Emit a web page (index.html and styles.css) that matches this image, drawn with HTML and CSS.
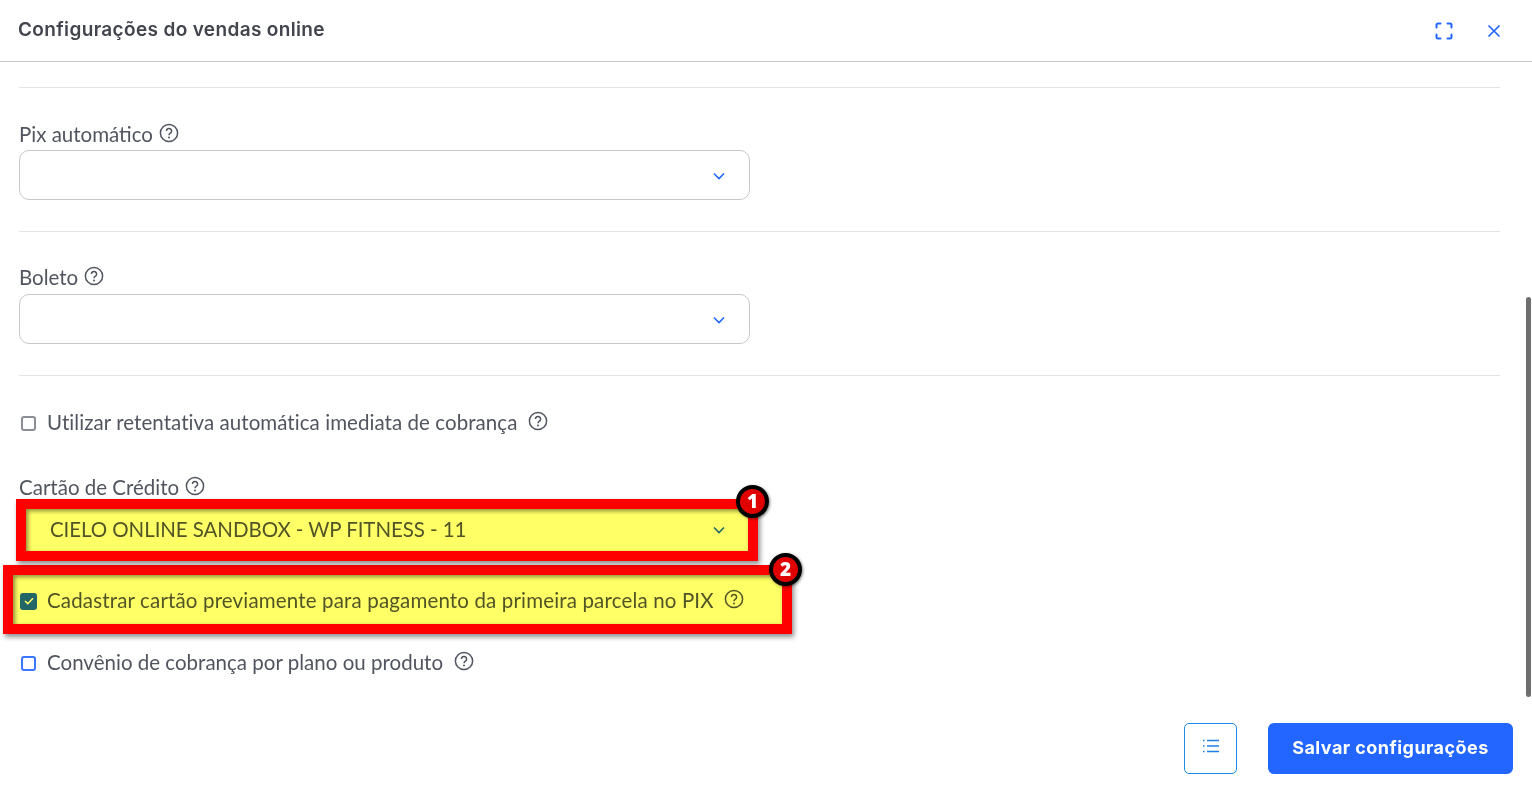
FILE: index.html
```html
<!DOCTYPE html>
<html lang="pt-BR">
<head>
<meta charset="utf-8">
<title>Configurações do vendas online</title>
<link rel="stylesheet" href="styles.css">
</head>
<body>
<div class="modal">
  <header class="modal-head">
    <h1 class="modal-title">Configurações do vendas online</h1>
    <div class="head-actions">
      <svg class="icon-expand" width="18" height="18" viewBox="0 0 18 18" fill="none" stroke="#2266ff" stroke-width="2" stroke-linecap="round"><path d="M1.5 5.5V3a1.5 1.5 0 0 1 1.5-1.5h2.5M12.5 1.5H15A1.5 1.5 0 0 1 16.500 3v2.500M16.500 12.500V15a1.500 1.500 0 0 1-1.500 1.500h-2.500M5.500 16.500H3A1.500 1.500 0 0 1 1.500 15v-2.500"/></svg>
      <svg width="14" height="14" viewBox="0 0 14 14" fill="none" stroke="#2266ff" stroke-width="1.700"><path d="M1.500 1.500l11 11M12.500 1.500l-11 11"/></svg>
    </div>
  </header>

  <main class="modal-body">
    <hr class="rule rule-first">
    <section class="field field-pix">
      <label class="field-label">Pix automático <svg class="help"><use href="#help"/></svg></label>
      <div class="select"><svg class="chev"><use href="#chev"/></svg></div>
    </section>
    <hr class="rule">
    <section class="field field-boleto">
      <label class="field-label">Boleto <svg class="help"><use href="#help"/></svg></label>
      <div class="select"><svg class="chev"><use href="#chev"/></svg></div>
    </section>
    <hr class="rule">
    <div class="check-row check-retry">
      <span class="box"></span>
      <span>Utilizar retentativa automática imediata de cobrança</span>
      <svg class="help"><use href="#help"/></svg>
    </div>
    <section class="field field-card">
      <label class="field-label">Cartão de Crédito <svg class="help"><use href="#help"/></svg></label>
      <div class="select select-filled"><span>CIELO ONLINE SANDBOX - WP FITNESS - 11</span><svg class="chev"><use href="#chev"/></svg></div>
    </section>
    <div class="check-row check-pix">
      <span class="box box-on"><svg width="10" height="8" viewBox="0 0 10 8" fill="none" stroke="#fff" stroke-width="1.600"><path d="M1 4l2.800 2.700L9 1.200"/></svg></span>
      <span>Cadastrar cartão previamente para pagamento da primeira parcela no PIX</span>
      <svg class="help"><use href="#help"/></svg>
    </div>
    <div class="check-row check-conv">
      <span class="box box-blue"></span>
      <span>Convênio de cobrança por plano ou produto</span>
      <svg class="help"><use href="#help"/></svg>
    </div>
  </main>

  <footer class="modal-foot">
    <button class="btn-list" type="button" aria-label="Lista">
      <svg width="18" height="14" viewBox="0 0 18 14" fill="none" stroke="#1f7fe0" stroke-width="1.400"><path d="M5 1.500h12M5 7h12M5 12.500h12"/><path d="M1 1.500h1.500M1 7h1.500M1 12.500h1.500"/></svg>
    </button>
    <button class="btn-save" type="button">Salvar configurações</button>
  </footer>
</div>

<div class="scrollbar"></div>

<div class="mark mark-one"></div>
<div class="mark mark-two"></div>
<span class="badge badge-one">1</span>
<span class="badge badge-two">2</span>

<svg class="defs" width="0" height="0">
  <symbol id="help" viewBox="0 0 20 20">
    <circle cx="10" cy="10" r="8.600" fill="none" stroke="currentColor" stroke-width="1.500"/>
    <path d="M7.400 8a2.600 2.600 0 1 1 4 2.200c-.9.6-1.400 1-1.400 2" fill="none" stroke="currentColor" stroke-width="1.500"/>
    <circle cx="10" cy="14.500" r="1" fill="currentColor"/>
  </symbol>
  <symbol id="chev" viewBox="0 0 12 8">
    <path d="M1 1.500l5 5 5-5" fill="none" stroke="#2266ff" stroke-width="1.600"/>
  </symbol>
</svg>
</body>
</html>
```
FILE: styles.css
```css
* { box-sizing: border-box; }
html, body { margin: 0; height: 100%; }
body {
  width: 1532px;
  height: 792px;
  overflow: hidden;
  position: relative;
  background: #fff;
  color: #51555f;
  font-family: "Lato", "Noto Sans", sans-serif;
  font-size: 20.5px;
}
.modal { display: flex; flex-direction: column; height: 792px; }
.modal-head {
  height: 62px;
  flex: none;
  display: flex;
  align-items: center;
  justify-content: space-between;
  padding: 0 31px 4px 18px;
  border-bottom: 1px solid #c9c9c9;
}
.modal-title {
  margin: 0;
  font-family: "Inter", "Open Sans", sans-serif;
  font-size: 19px;
  font-weight: 600;
  letter-spacing: .35px;
  color: #42454e;
  position: relative;
  top: 1px;
}
.head-actions { display: flex; align-items: center; gap: 34px; padding-top: 4px; }
.modal-body { flex: 1; padding: 25px 32px 0 19px; }
.rule { height: 1px; margin: 0; border: 0; background: #e4e4e4; }
.field { width: 731px; }
.field-label { display: flex; align-items: center; gap: 6px; height: 28px; line-height: 28px; padding-top: 2px; }
.field-label .help { margin-top: -2px; }
.field-pix { padding-top: 31px; padding-bottom: 31px; }
.field-pix .select { margin-top: 3px; }
.field-boleto { padding-top: 29px; padding-bottom: 31px; }
.field-boleto .field-label { height: 30px; }
.field-boleto .select { margin-top: 3px; }
.select {
  height: 50px;
  border: 1px solid #c8c8c8;
  border-radius: 10px;
  display: flex;
  align-items: center;
  justify-content: space-between;
  padding: 0 24px 0 30px;
}
.select-filled { margin-top: 3px; border-color: transparent; letter-spacing: -.08px; padding-top: 2px; }
.chev { width: 12px; height: 8px; margin-left: auto; position: relative; top: 1px; }
.help { width: 20px; height: 20px; flex: none; color: #51555f; }
.check-row { display: flex; align-items: center; height: 28px; padding-top: 2px; white-space: nowrap; letter-spacing: .06px; }
.check-row .help { margin-left: 11px; margin-top: -3px; }
.box {
  width: 15px;
  height: 15px;
  margin: 2px 11px 0 2px;
  flex: none;
  border: 2px solid #8b8e95;
  border-radius: 3px;
  display: flex;
  align-items: center;
  justify-content: center;
}
.box-on { width: 17px; height: 17px; margin: 2px 10px 0 1px; background: #2266ff; border-color: #2266ff; }
.box-blue { border-color: #3a76ff; }
.check-retry { margin-top: 31px; }
.field-card { padding-top: 37px; }
.check-pix { margin-top: 32px; letter-spacing: .155px; }
.check-pix .help { margin-left: 10px; }
.check-conv { margin-top: 34px; letter-spacing: .01px; }
.modal-foot {
  flex: none;
  height: 69px;
  display: flex;
  justify-content: flex-end;
  gap: 31px;
  padding: 0 19px 0 0;
}
.btn-list {
  width: 53px;
  height: 51px;
  padding: 0 0 5px;
  background: #fff;
  border: 1px solid #1f8be8;
  border-radius: 5px;
  display: flex;
  align-items: center;
  justify-content: center;
}
.btn-save {
  width: 245px;
  height: 51px;
  background: #2266ff;
  border: 0;
  border-radius: 6px;
  color: #fff;
  font-family: "Inter", "Open Sans", sans-serif;
  font-size: 18px;
  font-weight: 700;
  letter-spacing: .45px;
  padding: 0 0 2px;
}
.scrollbar {
  position: absolute;
  left: 1526px;
  top: 297px;
  width: 5px;
  height: 400px;
  background: #6e6e6e;
  border-radius: 3px;
}
.mark {
  position: absolute;
  border: 10px solid #ff0000;
  background: #ffff66;
  mix-blend-mode: multiply;
  box-shadow: 2px 3px 5px rgba(0, 0, 0, .45), inset 2px 2px 4px rgba(0, 0, 0, .45);
}
.mark-one { left: 16px; top: 499px; width: 742px; height: 62px; }
.mark-two { left: 3px; top: 565px; width: 789px; height: 69px; }
.badge {
  position: absolute;
  width: 33px;
  height: 33px;
  border-radius: 50%;
  background: #e00000;
  border: 4px solid #000;
  box-shadow: 1px 1px 3px rgba(0, 0, 0, .5);
  color: #fff;
  font-family: "Open Sans", sans-serif;
  font-weight: 800;
  font-size: 19px;
  line-height: 24px;
  text-align: center;
}
.badge-one { left: 736px; top: 485px; }
.badge-two { left: 769px; top: 553px; }
.defs { position: absolute; }
```
